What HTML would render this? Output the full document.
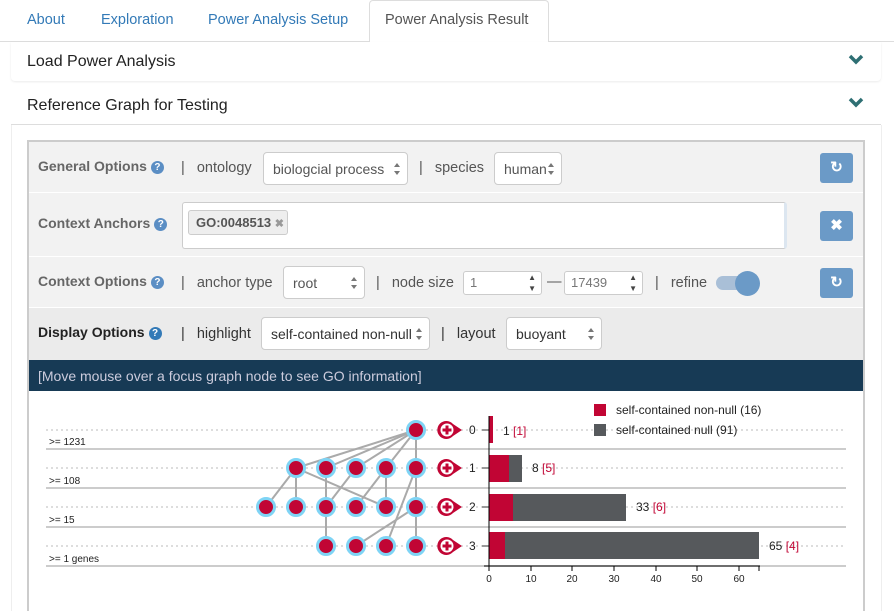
<!DOCTYPE html>
<html><head><meta charset="utf-8">
<style>
*{box-sizing:border-box;margin:0;padding:0}
body{width:894px;height:611px;overflow:hidden;background:#fff;font-family:"Liberation Sans",sans-serif;position:relative;color:#333}
.a{position:absolute;white-space:nowrap}
.tab{font-size:14.5px;color:#337ab7;top:12px}
.sel{position:absolute;background:#fff;border:1px solid #ccc;border-radius:4px;font-size:14px;color:#555;padding:0 0 0 9px;line-height:32px;height:33px}
.sel:after{content:"";position:absolute;right:7px;top:10px;border:3.5px solid transparent;border-bottom:4px solid #777;border-top:0}
.sel:before{content:"";position:absolute;right:7px;top:18px;border:3.5px solid transparent;border-top:4px solid #777;border-bottom:0}
.lbl{font-size:14px;font-weight:bold;color:#666}
.q{display:inline-block;width:13px;height:13px;border-radius:50%;background:#5b8ec4;color:#fff;font-size:10px;line-height:13px;text-align:center;vertical-align:1px;margin-left:4px}
.t{font-size:14.5px;color:#555}
.btn{position:absolute;left:820px;width:33px;height:30px;background:#6b9ac7;border-radius:3px;color:#fff;text-align:center;line-height:30px;font-size:15px;font-weight:bold}
.num{position:absolute;background:#fff;border:1px solid #ccc;border-radius:3px;height:24px;font-size:13px;color:#777;line-height:22px;padding-left:6px}
</style></head><body>
<!-- tabs -->
<div class="a" style="left:0;top:41px;width:894px;height:1px;background:#ddd"></div>
<div class="a" style="left:369px;top:0;width:180px;height:42px;background:#fff;border:1px solid #ddd;border-bottom:none;border-radius:4px 4px 0 0"></div>
<div class="a tab" style="left:27px">About</div>
<div class="a tab" style="left:101px">Exploration</div>
<div class="a tab" style="left:208px">Power Analysis Setup</div>
<div class="a tab" style="left:385px;color:#555">Power Analysis Result</div>
<!-- panels -->
<div class="a" style="left:11px;top:42px;width:870px;height:39px;box-shadow:0 1px 2px rgba(0,0,0,.08);border-radius:0 0 4px 4px"></div>
<div class="a" style="left:27px;top:53px;font-size:16px;color:#222">Load Power Analysis</div>
<div class="a" style="left:11px;top:124px;width:870px;height:1px;background:#ddd"></div>
<div class="a" style="left:27px;top:97px;font-size:16px;color:#222">Reference Graph for Testing</div>
<svg class="a" style="left:848px;top:54px" width="16" height="56"><path d="M2 2l6 6 6-6" stroke="#2e6f73" stroke-width="3.5" fill="none"/><path d="M2 45l6 6 6-6" stroke="#2e6f73" stroke-width="3.5" fill="none"/></svg>
<div class="a" style="left:11px;top:125px;width:1px;height:486px;background:#eee"></div>
<div class="a" style="left:881px;top:125px;width:1px;height:486px;background:#eee"></div>
<!-- options container -->
<div class="a" style="left:27px;top:140px;width:838px;height:471px;border:2px solid #ccc;border-bottom:none;background:#fff"></div>
<div class="a" style="left:29px;top:142px;width:834px;height:51px;background:#f2f2f2;border-bottom:1px solid #fff"></div>
<div class="a" style="left:29px;top:193px;width:834px;height:64px;background:#f2f2f2;border-bottom:1px solid #fff"></div>
<div class="a" style="left:29px;top:257px;width:834px;height:51px;background:#f2f2f2;border-bottom:1px solid #fff"></div>
<div class="a" style="left:29px;top:308px;width:834px;height:52px;background:#ebebeb"></div>
<div class="a" style="left:29px;top:360px;width:834px;height:31px;background:#173a55"></div>
<div class="a" style="left:38px;top:368px;font-size:14px;color:#ccd">[Move mouse over a focus graph node to see GO information]</div>
<!-- row1 -->
<div class="a lbl" style="left:38px;top:158px">General Options<span class="q">?</span></div>
<div class="a t" style="left:181px;top:160px">|&nbsp;&nbsp;&nbsp;ontology</div>
<div class="sel" style="left:263px;top:152px;width:145px">biologcial process</div>
<div class="a t" style="left:419px;top:160px">|&nbsp;&nbsp;&nbsp;species</div>
<div class="sel" style="left:494px;top:152px;width:68px">human</div>
<div class="btn" style="top:153px">&#x21bb;</div>
<!-- row2 -->
<div class="a lbl" style="left:38px;top:215px">Context Anchors<span class="q">?</span></div>
<div class="a" style="left:182px;top:202px;width:605px;height:47px;background:#fff;border:1px solid #ccc;border-right:3px solid #dce6f0;border-radius:3px"></div>
<div class="a" style="left:188px;top:210px;width:100px;height:25px;background:#eee;border:1px solid #ccc;border-radius:3px;font-size:13px;font-weight:bold;color:#555;line-height:23px;padding-left:7px">GO:0048513 <span style="color:#999;font-size:11px">&#x2716;</span></div>
<div class="btn" style="top:211px">&#x2716;</div>
<!-- row3 -->
<div class="a lbl" style="left:38px;top:273px">Context Options<span class="q">?</span></div>
<div class="a t" style="left:181px;top:275px">|&nbsp;&nbsp;&nbsp;anchor type</div>
<div class="sel" style="left:283px;top:266px;width:82px">root</div>
<div class="a t" style="left:376px;top:275px">|&nbsp;&nbsp;&nbsp;node size</div>
<div class="num" style="left:463px;top:271px;width:79px">1<span style="position:absolute;right:5px;top:0;font-size:8px;line-height:11px;color:#444">▲<br>▼</span></div>
<div class="a t" style="left:547px;top:274px">—</div>
<div class="num" style="left:564px;top:271px;width:79px">17439<span style="position:absolute;right:5px;top:0;font-size:8px;line-height:11px;color:#444">▲<br>▼</span></div>
<div class="a t" style="left:655px;top:275px">|&nbsp;&nbsp;&nbsp;refine</div>
<div class="a" style="left:716px;top:276px;width:40px;height:14px;border-radius:7px;background:#a9bfd7"></div>
<div class="a" style="left:735px;top:271px;width:25px;height:25px;border-radius:50%;background:#6b9ac7"></div>
<div class="btn" style="top:268px">&#x21bb;</div>
<!-- row4 -->
<div class="a lbl" style="left:38px;top:324px;color:#222">Display Options<span class="q" style="background:#337ab7">?</span></div>
<div class="a t" style="left:181px;top:326px;color:#333">|&nbsp;&nbsp;&nbsp;highlight</div>
<div class="sel" style="left:261px;top:317px;width:169px;color:#333">self-contained non-null</div>
<div class="a t" style="left:441px;top:326px;color:#333">|&nbsp;&nbsp;&nbsp;layout</div>
<div class="sel" style="left:506px;top:317px;width:96px;color:#333">buoyant</div>
<!-- graph -->
<svg class="a" style="left:0;top:391px" width="894" height="220" font-family="Liberation Sans, sans-serif">
<g transform="translate(0,-391)">
<g stroke="#bbb" stroke-dasharray="2,3" stroke-width="1">
<line x1="46" y1="430" x2="846" y2="430"/><line x1="46" y1="468" x2="846" y2="468"/><line x1="46" y1="507" x2="846" y2="507"/><line x1="46" y1="546" x2="846" y2="546"/>
</g>
<g stroke="#bbb" stroke-width="1.5">
<line x1="46" y1="449" x2="846" y2="449"/><line x1="46" y1="488" x2="846" y2="488"/><line x1="46" y1="527" x2="846" y2="527"/><line x1="46" y1="566" x2="846" y2="566"/>
</g>
<g font-size="10" fill="#222">
<text x="49" y="445">&gt;= 1231</text><text x="49" y="484">&gt;= 108</text><text x="49" y="523">&gt;= 15</text><text x="49" y="562">&gt;= 1 genes</text>
</g>
<g stroke="#aaa" stroke-width="2">
<line x1="416" y1="430" x2="296" y2="468"/><line x1="416" y1="430" x2="326" y2="468"/><line x1="416" y1="430" x2="356" y2="468"/><line x1="416" y1="430" x2="386" y2="468"/><line x1="416" y1="430" x2="416" y2="468"/>
<line x1="296" y1="468" x2="266" y2="507"/><line x1="296" y1="468" x2="296" y2="507"/><line x1="296" y1="468" x2="386" y2="507"/>
<line x1="326" y1="468" x2="326" y2="546"/><line x1="356" y1="468" x2="326" y2="507"/>
<line x1="386" y1="468" x2="356" y2="507"/><line x1="386" y1="468" x2="386" y2="507"/>
<line x1="416" y1="468" x2="416" y2="546"/><line x1="416" y1="468" x2="386" y2="546"/><line x1="416" y1="507" x2="356" y2="546"/>
</g>
<g fill="#c10534" stroke="#7fd4f5" stroke-width="3">
<circle cx="416" cy="430" r="8.5"/>
<circle cx="296" cy="468" r="8.5"/><circle cx="326" cy="468" r="8.5"/><circle cx="356" cy="468" r="8.5"/><circle cx="386" cy="468" r="8.5"/><circle cx="416" cy="468" r="8.5"/>
<circle cx="266" cy="507" r="8.5"/><circle cx="296" cy="507" r="8.5"/><circle cx="326" cy="507" r="8.5"/><circle cx="356" cy="507" r="8.5"/><circle cx="386" cy="507" r="8.5"/><circle cx="416" cy="507" r="8.5"/>
<circle cx="326" cy="546" r="8.5"/><circle cx="356" cy="546" r="8.5"/><circle cx="386" cy="546" r="8.5"/><circle cx="416" cy="546" r="8.5"/>
</g>
<defs><g id="m"><path d="M462 0L453 -6A9 9 0 1 0 453 6Z" fill="#c10534"/><circle cx="447" cy="0" r="6.5" fill="#fff"/><path d="M447 -4.5v9M442.5 0h9" stroke="#c10534" stroke-width="3"/></g></defs>
<use href="#m" y="430"/><use href="#m" y="468"/><use href="#m" y="507"/><use href="#m" y="546"/>
<g font-size="12" fill="#222"><text x="469" y="434">0</text><text x="469" y="472">1</text><text x="469" y="511">2</text><text x="469" y="550">3</text></g>
<g stroke="#333"><line x1="482" y1="468" x2="489" y2="468"/><line x1="482" y1="507" x2="489" y2="507"/><line x1="482" y1="546" x2="489" y2="546"/><line x1="482" y1="430" x2="489" y2="430"/></g>
<rect x="489" y="416" width="4" height="27" fill="#c10534"/>
<rect x="489" y="455" width="33" height="27" fill="#56595c"/><rect x="489" y="455" width="20" height="27" fill="#c10534"/>
<rect x="489" y="494" width="137" height="27" fill="#56595c"/><rect x="489" y="494" width="24" height="27" fill="#c10534"/>
<rect x="489" y="532" width="270" height="27" fill="#56595c"/><rect x="489" y="532" width="16" height="27" fill="#c10534"/>
<g font-size="12" fill="#222"><text x="503" y="435">1 <tspan fill="#c10534">[1]</tspan></text><text x="532" y="472">8 <tspan fill="#c10534">[5]</tspan></text><text x="636" y="511">33 <tspan fill="#c10534">[6]</tspan></text><text x="769" y="550">65 <tspan fill="#c10534">[4]</tspan></text></g>
<line x1="489" y1="416" x2="489" y2="566" stroke="#000"/>
<line x1="484" y1="566" x2="760" y2="566" stroke="#000"/>
<g stroke="#000"><line x1="489" y1="566" x2="489" y2="571"/><line x1="531" y1="566" x2="531" y2="571"/><line x1="572" y1="566" x2="572" y2="571"/><line x1="614" y1="566" x2="614" y2="571"/><line x1="656" y1="566" x2="656" y2="571"/><line x1="697" y1="566" x2="697" y2="571"/><line x1="739" y1="566" x2="739" y2="571"/><line x1="759" y1="566" x2="759" y2="571"/></g>
<g font-size="10" fill="#222" text-anchor="middle"><text x="489" y="582">0</text><text x="531" y="582">10</text><text x="572" y="582">20</text><text x="614" y="582">30</text><text x="656" y="582">40</text><text x="697" y="582">50</text><text x="739" y="582">60</text></g>
<rect x="594" y="404" width="12" height="12" fill="#c10534"/><rect x="594" y="424" width="12" height="12" fill="#56595c"/>
<g font-size="12" fill="#222"><text x="616" y="414">self-contained non-null (16)</text><text x="616" y="434">self-contained null (91)</text></g>
</g>
</svg>
</body></html>
